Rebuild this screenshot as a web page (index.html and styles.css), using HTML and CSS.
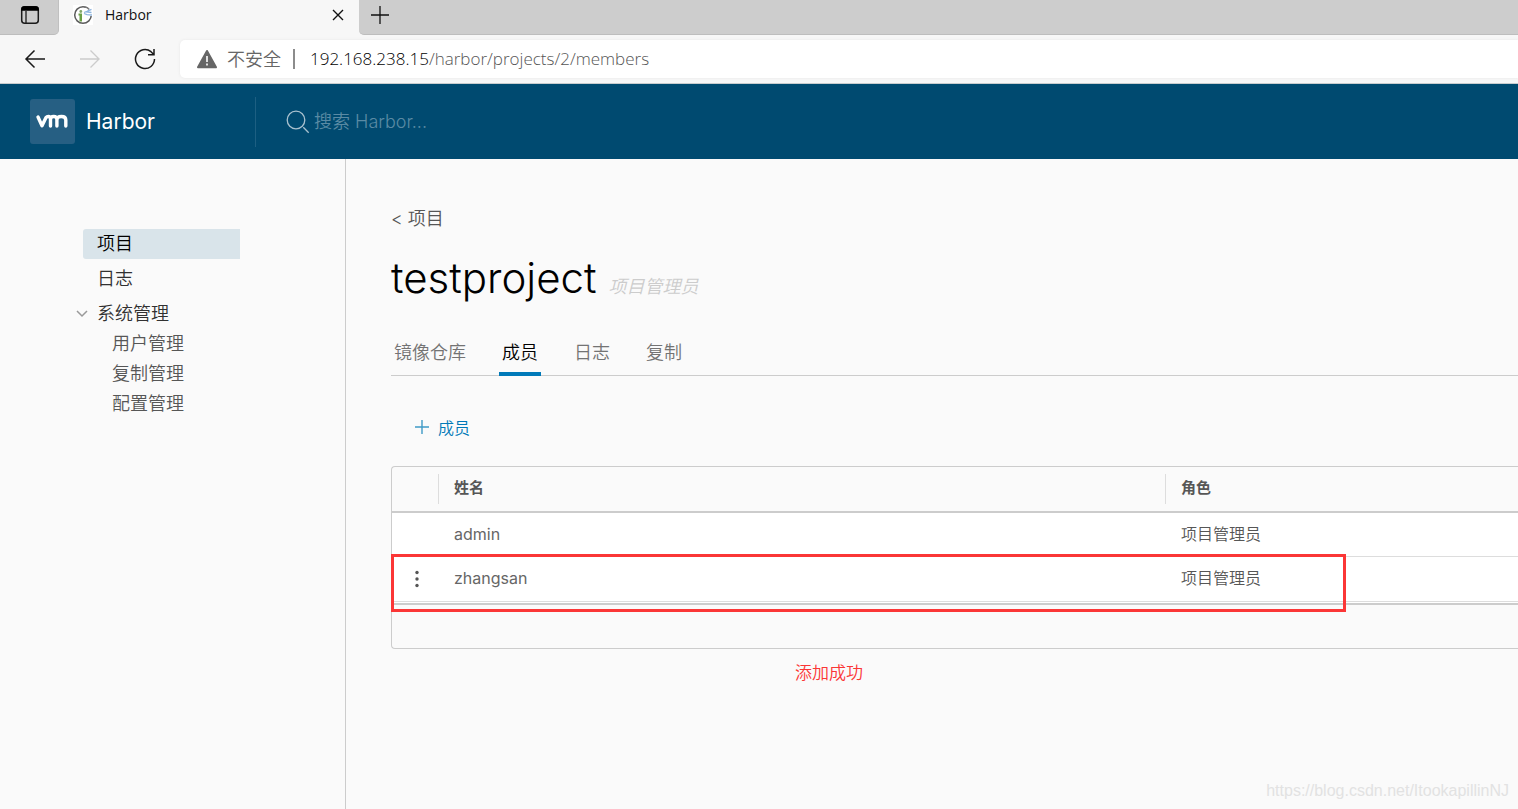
FILE: index.html
```html
<!DOCTYPE html>
<html lang="zh-CN">
<head>
<meta charset="utf-8">
<title>Harbor</title>
<link rel="stylesheet" href="styles.css">
</head>
<body>
<div class="browser">
  <div class="tab-strip">
    <button class="tab-actions" aria-label="Tab actions">
      <svg width="20" height="20" viewBox="0 0 20 20" fill="none" stroke="#1b1b1b" stroke-width="1.5"><rect x="1.7" y="1.7" width="16.6" height="16.6" rx="3"/><path d="M2 5V4a2 2 0 0 1 2-2h12a2 2 0 0 1 2 2v1z" fill="#000" stroke="#000"/><path d="M6 6v12" stroke-width="1.3"/></svg>
    </button>
    <div class="tab">
      <svg width="20" height="20" viewBox="0 0 20 20"><rect width="20" height="20" fill="#fff"/><circle cx="10" cy="10" r="8.300" fill="none" stroke="#5c5c5c" stroke-width="1.500"/><path d="M11 3h9v8h-9z" fill="#fff"/><path d="M11 1.800q3.500.3 5.300 2.700" fill="none" stroke="#777" stroke-width="1.400"/><path d="M5.500 8.500H9V16.500H6.500v-6h-1z" fill="#6a9f45"/><circle cx="7.800" cy="6.500" r="1.400" fill="#83a86b"/><path d="M11 7.500l3-1.200 4.500-2M11 8.500l3 1.200 5 .3M13 6.800l5.500.7" fill="none" stroke="#8fb5df" stroke-width="1.300"/></svg>
      <span class="tab-title">Harbor</span>
      <button class="tab-close" aria-label="Close tab">
        <svg width="12" height="12" viewBox="0 0 12 12" stroke="#111" stroke-width="1.400"><path d="M1 1l10 10M11 1L1 11"/></svg>
      </button>
    </div>
    <button class="tab-new" aria-label="New tab">
      <svg width="18" height="18" viewBox="0 0 18 18" stroke="#111" stroke-width="1.300"><path d="M9 0v18M0 9h18"/></svg>
    </button>
  </div>
  <div class="toolbar">
    <div class="nav-buttons">
      <button aria-label="Back"><svg width="22" height="20" viewBox="0 0 22 20" fill="none" stroke="#1a1a1a" stroke-width="1.500"><path d="M21 10H2M10.500 1.500L2 10l8.500 8.500"/></svg></button>
      <button aria-label="Forward"><svg width="22" height="20" viewBox="0 0 22 20" fill="none" stroke="#ccc" stroke-width="1.400"><path d="M1 10h19M11.500 1.500L20 10l-8.500 8.500"/></svg></button>
      <button aria-label="Refresh"><svg width="22" height="22" viewBox="0 0 22 22" fill="none" stroke="#1a1a1a" stroke-width="1.500"><path d="M20.500 11A9.500 9.500 0 1 1 17 3.700L19.800 6.500M20 1v5.700h-6"/></svg></button>
    </div>
    <div class="address">
      <svg width="22" height="20" viewBox="0 0 22 20"><path d="M11 2L20 18.300H2z" fill="#666" stroke="#666" stroke-width="2" stroke-linejoin="round"/><path d="M11 7v6M11 14.500v2" stroke="#fff" stroke-width="1.600"/></svg>
      <span class="insecure">不安全</span>
      <span class="url"><b>192.168.238.15</b>/harbor/projects/2/members</span>
    </div>
  </div>
</div>

<header class="header">
  <a class="brand" href="#">
    <svg width="45" height="45" viewBox="0 0 45 45" fill="none" stroke="#fff" stroke-width="3.400" stroke-linecap="round" stroke-linejoin="round"><rect width="45" height="45" rx="3" fill="#265f83" stroke="none"/><path d="M8 18l4 8.800L16 18.500q.8-1 2.300-1 2.200 0 2.200 2.500v7M20.500 20.500q0-3 3.200-3t3.200 3v6.500M27 20.500q0-3 4.500-3 4.300 0 4.300 3.500v6"/></svg>
    <span>Harbor</span>
  </a>
  <label class="search">
    <svg width="24" height="24" viewBox="0 0 24 24" fill="none" stroke="#a9c1cf" stroke-width="1.300"><circle cx="10" cy="10" r="8.800"/><path d="M17.300 17.300l5.400 5.400"/></svg>
    <input type="text" placeholder="搜索 Harbor..." aria-label="搜索 Harbor">
  </label>
</header>

<div class="main">
  <nav class="sidebar">
    <a class="nav-item active" href="#">项目</a>
    <a class="nav-item" href="#">日志</a>
    <div class="nav-group">
      <button class="nav-item group-toggle" aria-expanded="true">
        <svg width="12" height="8" viewBox="0 0 12 8" fill="none" stroke="#999" stroke-width="1.500"><path d="M1 1l5 5 5-5"/></svg>系统管理
      </button>
      <a href="#">用户管理</a>
      <a href="#">复制管理</a>
      <a href="#">配置管理</a>
    </div>
  </nav>

  <main class="content">
    <a class="back" href="#">&lt; 项目</a>
    <div class="title">
      <h1>testproject</h1>
      <em>项目管理员</em>
    </div>
    <nav class="tabs">
      <a href="#">镜像仓库</a>
      <a class="current" href="#">成员</a>
      <a href="#">日志</a>
      <a href="#">复制</a>
    </nav>
    <button class="add-member">
      <svg width="16" height="16" viewBox="0 0 16 16" stroke="#3f9ac6" stroke-width="1.400"><path d="M8 1v14M1 8h14"/></svg>
      成员
    </button>
    <div class="datagrid">
      <table>
        <colgroup><col class="col-action"><col class="col-name"><col></colgroup>
        <thead>
          <tr><th></th><th><div>姓名</div></th><th><div>角色</div></th></tr>
        </thead>
        <tbody>
          <tr><td></td><td class="name">admin</td><td>项目管理员</td></tr>
          <tr><td class="action"><button aria-label="操作"><svg width="4" height="18" viewBox="0 0 4 18" fill="#555"><circle cx="2" cy="2.500" r="1.700"/><circle cx="2" cy="9" r="1.700"/><circle cx="2" cy="15.500" r="1.700"/></svg></button></td><td class="name">zhangsan</td><td>项目管理员</td></tr>
        </tbody>
      </table>
      <div class="grid-footer"></div>
      <div class="highlight"></div>
    </div>
    <p class="note">添加成功</p>
  </main>
  <span class="watermark">https://blog.csdn.net/ItookapillinNJ</span>
</div>
</body>
</html>
```
FILE: styles.css
```css
* { box-sizing: border-box; }
body {
  margin: 0;
  min-height: 100vh;
  display: flex;
  flex-direction: column;
  overflow-x: hidden;
  background: #fafafa;
  color: #565656;
  font-family: Inter, "Noto Sans CJK SC", sans-serif;
  font-size: 16px;
  font-weight: 350;
}
button {
  border: 0;
  padding: 0;
  background: none;
  color: inherit;
  font: inherit;
  cursor: pointer;
}
a { color: inherit; text-decoration: none; }
svg { display: block; flex: none; }

.browser { font-family: "Open Sans", "Noto Sans CJK SC", sans-serif; background: #f7f7f7; }
.tab-strip { display: flex; height: 35px; background: #f7f7f7; }
.tab-actions,
.tab-new { background: #cdcdcd; border-bottom: 1px solid #bdbdbd; }
.tab-actions {
  width: 59px;
  padding: 0 0 4px 20px;
  border-right: 1px solid #c0c0c0;
  border-bottom-right-radius: 5px;
}
.tab {
  display: flex;
  align-items: center;
  width: 300px;
  padding: 0 15px 5px 14px;
}
.tab-title { flex: 1; margin-left: 12px; padding-bottom: 2px; color: #111; font-size: 14px; font-weight: 400; }
.tab-new { flex: 1; padding: 0 0 5px 12px; border-bottom-left-radius: 5px; }
.toolbar {
  display: flex;
  height: 49px;
  padding: 5px 0;
  border-bottom: 1px solid #c8ccce;
}
.nav-buttons { display: flex; align-items: center; gap: 33px; width: 180px; padding-left: 24px; }
.address {
  flex: 1;
  display: flex;
  align-items: center;
  padding-left: 16px;
  border-radius: 5px 0 0 5px;
  background: #fff;
  box-shadow: 0 0 3px #e6e6e6;
  font-size: 17px;
  color: #666;
}
.insecure { padding: 0 12px 0 9px; border-right: 2px solid #8c8c8c; font-size: 18px; line-height: 20px; }
.url { margin-left: 15px; padding-bottom: 2px; color: #555; }
.url b { color: #000; font-weight: inherit; }

.header { display: flex; align-items: center; height: 75px; background: #004a70; }
.brand {
  display: flex;
  align-items: center;
  gap: 11px;
  width: 256px;
  height: 50px;
  padding-left: 30px;
  border-right: 1px solid #1d5f82;
  color: #fff;
  font-size: 21px;
  font-weight: 400;
}
.search { flex: 1; display: flex; align-items: center; gap: 4px; padding-left: 30px; }
.search input {
  flex: 1;
  border: 0;
  padding: 0;
  background: none;
  color: #fff;
  font: inherit;
  font-size: 18px;
  outline: 0;
}
.search input::placeholder { color: #5a8aa4; }

.main { position: relative; flex: 1; display: flex; }
.sidebar {
  flex: none;
  width: 346px;
  padding: 70px 105px 0 83px;
  border-right: 1px solid #ccc;
  font-size: 18px;
  line-height: 30px;
}
.nav-item {
  display: block;
  height: 30px;
  margin-bottom: 5px;
  padding-left: 14px;
  border-radius: 3px 0 0 3px;
  color: #313131;
}
.active { background: #d9e4ea; color: #000; }
.nav-group a { display: block; padding-left: 29px; }
.nav-group .group-toggle {
  display: flex;
  align-items: center;
  gap: 9px;
  margin: 0 0 0 -7px;
  padding: 0;
}

.content { flex: 1; min-width: 0; padding: 45px 0 0 45px; }
.back { display: block; font-size: 18px; line-height: 30px; }
.title { display: flex; align-items: baseline; gap: 12px; margin-top: 19px; height: 50px; }
.title h1 { margin: 0; color: #000; font-size: 42px; line-height: 50px; font-weight: 300; }
.title em { color: #ccc; font-size: 18px; line-height: 24px; }
.tabs {
  display: flex;
  gap: 30px;
  margin-top: 29px;
  height: 44px;
  border-bottom: 1px solid #ccc;
  color: #737373;
  font-size: 18px;
  line-height: 42px;
}
.tabs a { padding: 0 3px; height: 44px; }
.tabs .current { color: #000; border-bottom: 4px solid #0079b8; }
.add-member {
  display: flex;
  align-items: center;
  gap: 8px;
  height: 30px;
  margin: 36px 0 0 23px;
  color: #0079b8;
  font-size: 16px;
}
.datagrid {
  position: relative;
  margin-top: 24px;
  border: 1px solid #ccc;
  border-right: 0;
  border-radius: 4px 0 0 4px;
}
table { width: 100%; table-layout: fixed; border-spacing: 0; }
.col-action { width: 46px; }
.col-name { width: 727px; }
th { height: 46px; padding: 0 0 1px; border-bottom: 2px solid #ccc; text-align: left; font-size: 15px; font-weight: 700; }
th div { height: 30px; padding-left: 15px; border-left: 1px solid #ddd; line-height: 28px; }
td { height: 44px; padding: 0 0 2px 16px; border-bottom: 1px solid #ddd; background: #fff; line-height: 24px; }
tr:last-child td { height: 45px; }
td.name { font-weight: 400; color: #666; }
td.action { padding: 0 0 0 23px; }
td button { display: block; }
.grid-footer { height: 45px; border-top: 2px solid #ccc; box-shadow: 0 -1px #fff; margin-top: 1px; }
.highlight {
  position: absolute;
  top: 87px;
  left: -1px;
  width: 955px;
  height: 58px;
  border: 3px solid #fb3636;
}
.note { margin: 12px 0 0 404px; color: #fb3636; font-size: 17px; line-height: 24px; }
.watermark {
  position: absolute;
  right: 9px;
  bottom: 8px;
  color: #e2e2e2;
  font: 16px/20px "Liberation Sans", sans-serif;
}
```
